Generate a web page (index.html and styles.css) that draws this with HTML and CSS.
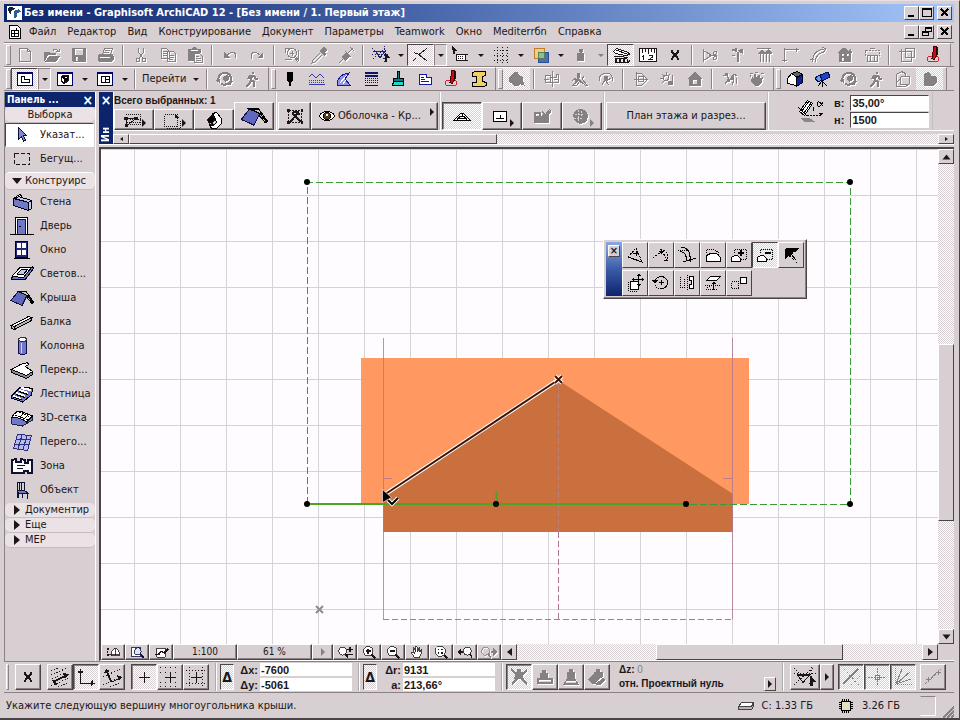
FILE: index.html
```html
<!DOCTYPE html>
<html lang="ru">
<head>
    <meta charset="UTF-8">
    <meta name="viewport" content="width=device-width, initial-scale=1.0">
    <title>Graphisoft ArchiCAD 12</title>
    <link rel="stylesheet" href="styles.css">
</head>
<body>
    <!-- Icon sprite, every icon sits on a 20x20 grid -->
    <svg class="sprite" aria-hidden="true">
        <symbol id="new" viewBox="0 0 20 20"><path d="M4.500 3.500h8l3 3v10h-11zM12.500 3.500v3h3"/></symbol>
        <symbol id="open" viewBox="0 0 20 20"><path class="f" d="M2 7h5l1 1h6v2H6l-3 6H2zM7 11h11l-4 6H3z"/><path d="M11 5.500c2-2 4-2 5 1M14 6.500h3v-3"/></symbol>
        <symbol id="save" viewBox="0 0 20 20"><path class="f" fill-rule="evenodd" d="M3 3h14v14H4l-1-1zM6 4v6h8V4zM7 12v4h2v-4z"/></symbol>
        <symbol id="print" viewBox="0 0 20 20"><path d="M6.500 9.500l2-6h8l-2 6M9 5.500h5M8 7.500h5"/><path class="f" fill-rule="evenodd" d="M3 9h14v2l1-1v4l-3 3H3l-1-2v-4zM4 12v1h10v-1z"/></symbol>
        <symbol id="cut" viewBox="0 0 20 20"><path d="M7.500 3v4l4 6M12.500 3v4l-4 6"/><circle cx="7" cy="15" r="2"/><circle cx="13" cy="15" r="2"/></symbol>
        <symbol id="copy" viewBox="0 0 20 20"><path d="M3.500 3.500h5l3 3v7h-8zM5 6.500h4M5 8.500h5M5 10.500h5M9.500 6.500h6l2 2v8h-8zM11 10.500h5M11 12.500h5M11 14.500h4"/></symbol>
        <symbol id="paste" viewBox="0 0 20 20"><path class="f" fill-rule="evenodd" d="M3 4h4l1-2h3l1 2h4v4H9v8H3zM6 5v1h7V5z"/><path d="M9.500 8.500h5l3 3v6h-8zM11 11.500h3M11 13.500h5M11 15.500h5"/></symbol>
        <symbol id="undo" viewBox="0 0 20 20"><path d="M7 10l4-2.500c4-1 6 2 4 6"/><path class="f" d="M4 7v6h6z"/></symbol>
        <symbol id="redo" viewBox="0 0 20 20"><path d="M13 10L9 7.500c-4-1-6 2-4 6"/><path class="f" d="M16 7v6h-6z"/></symbol>
        <symbol id="find" viewBox="0 0 20 20"><path d="M3 3.500h5M3.500 3v5M3 14.500h7M16.500 5v9"/><circle cx="10" cy="8" r="4.500"/><path d="M8 8.500h4M10.500 6v5M12 12l4 5M14 12l3 4"/></symbol>
        <symbol id="pipette" viewBox="0 0 20 20"><path class="f" d="M12 4l3-2 3 3-2 3 1 1-2 2-5-5 2-2z"/><path d="M11 8l-7 7-1 3 3-1 7-7"/></symbol>
        <symbol id="syringe" viewBox="0 0 20 20"><path class="f" d="M10 7l4 4-5 5-4-4z"/><path d="M3 18l4-4M12 8l5-5M14 2l4 4M9 6l6 6"/></symbol>
        <symbol id="snapguide" viewBox="0 0 20 20"><g stroke="#20206a"><path d="M2 6.500h13M5 7l4 6 6-8"/><path stroke-dasharray="1 2" d="M1 9.500h18M13.500 1v17M2 14l14-12M1 3l16 14"/></g><path class="f" d="M14 8l5 5h-3v4h-2z"/></symbol>
        <symbol id="cross" viewBox="0 0 20 20"><path d="M3 7.500l5 2 8-6M7 9l9 7M2 16l3-3"/></symbol>
        <symbol id="cursorbox" viewBox="0 0 20 20"><path class="f" d="M1 1l5 5H4v3H2z"/><path fill="#fff" d="M5.500 9.500h9v6h-9z"/><path stroke-dasharray="1 1" d="M7 11.500h6M7 13.500h6"/><path stroke-dasharray="2 2" d="M15 9.500h3M15 15.500h3"/></symbol>
        <symbol id="dotgrid" viewBox="0 0 20 20"><path stroke-dasharray="1 2" d="M3 5.500h15M3 10.500h15M3 15.500h15M6.500 2v16M11.500 2v16M16.500 2v16"/></symbol>
        <symbol id="layers" viewBox="0 0 20 20"><path fill="#4b6fb5" stroke="#274d94" d="M7.500 7.500h10v10h-10z"/><path fill="#f4cc74" fill-opacity=".8" stroke="#c27e22" d="M3.500 3.500h10v10h-10z"/><path fill="#8fc08c" stroke="#56805d" d="M7.500 7.500h6v6h-6z"/></symbol>
        <symbol id="jar" viewBox="0 0 20 20"><path class="f" d="M8 4h4v3h-1v1h2v8H6V8h3V7H8z"/></symbol>
        <symbol id="teeth" viewBox="0 0 20 20"><path fill="#fff" d="M2.500 6.500l3-3 12 4 1 2-4 1-10-2z"/><path d="M5 5l11 4M3 11.500h5l9 1M4 13.500h12M4 17.500h13l2-2"/><path stroke-dasharray="2 2" stroke-width="3" d="M4 15.500h13"/></symbol>
        <symbol id="ruler" viewBox="0 0 20 20"><path fill="#fff" d="M1.500 3.500h17v13h-17z"/><path d="M4.500 4v4M7.500 4v3M10.500 4v5M13.500 4v3M16.500 4v4M5.500 10v5M4 11.500h1M11 10.500h3v2l-3 2h4"/></symbol>
        <symbol id="xmark" viewBox="0 0 20 20"><path stroke-width="2" d="M7 7l6 6M13 7l-6 6M6 6h2M12 6h2M6 14h2M12 14h2"/></symbol>
        <symbol id="trim" viewBox="0 0 20 20"><path d="M3.500 4v13M4 6l9 5M4 15l9-5M9 10.500h8"/><circle cx="15" cy="8" r="1.500"/><circle cx="15" cy="13" r="1.500"/></symbol>
        <symbol id="axe" viewBox="0 0 20 20"><path class="f" d="M3 5l7-2v4L6 6zM10 5l6-1v5l-4-2z"/><path d="M11.500 7v10M10.500 7v10M5 10h3"/></symbol>
        <symbol id="adjust" viewBox="0 0 20 20"><path d="M3 3.500h14M6.500 8v9M9.500 7v10M12.500 7v10M15.500 8v9"/><path class="f" d="M4 8l4-4 3 4 3-4 4 4v1H4z"/></symbol>
        <symbol id="corner" viewBox="0 0 20 20"><path d="M3.500 17V4.500h14M3.500 3v3M15 2.500v4M1 15.500h5"/></symbol>
        <symbol id="fillet" viewBox="0 0 20 20"><path d="M4.500 17c0-7 4-12 12-13M7.500 17c0-6 4-9 8-10M14 2l4 2-3 4M2 14h4"/></symbol>
        <symbol id="house2" viewBox="0 0 20 20"><path class="f" fill-rule="evenodd" d="M3 8l4-5h3l3 3 3-3 1 5h-1v9H4V8zM7 9v2h2V9zM12 9v2h2V9zM7 13v3h2v-3z"/></symbol>
        <symbol id="stretch" viewBox="0 0 20 20"><path stroke-dasharray="2 1" d="M3.500 5.500h14v5h-14z"/><path d="M5.500 10.500h10v6h-10zM8.500 11v5M12.500 11v5M8 3.500h5"/></symbol>
        <symbol id="group" viewBox="0 0 20 20"><path d="M4.500 6.500h10v10h-10zM8.500 3.500h9v9h-9zM2 6.500h4M4.500 4v4M12 12.500h5M14.500 10v6"/></symbol>
        <symbol id="redpen" viewBox="0 0 20 20"><ellipse cx="9" cy="14" rx="6" ry="3" stroke="#e02030"/><path fill="#c80d1a" stroke="#500" d="M10 1.500h3l1 7-4 6-2-1 1-6z"/><path d="M12 2v8" stroke="#200"/></symbol>

        <symbol id="plan" viewBox="0 0 20 20"><path fill="#fff" stroke="#00006a" d="M2.500 3.500h15v13h-15zM2.500 4.500h15"/><path stroke="#000" d="M6.500 7.500h3v3h5v3h-8z"/></symbol>
        <symbol id="view3d" viewBox="0 0 20 20"><path fill="#fff" stroke="#00006a" d="M2.500 3.500h15v13h-15zM2.500 4.500h15"/><path fill="#000" d="M6 8l3-2 5 1-1 5-4 3-3-3z"/><path fill="#fff" stroke="none" d="M7 9l2 1v3l-2-1zM10 8l2 0-1 2z"/></symbol>
        <symbol id="layout" viewBox="0 0 20 20"><path fill="#fff" stroke="#00006a" d="M2.500 3.500h15v13h-15zM2.500 4.500h15"/><path stroke="#000" d="M6.500 7.500h8v6h-8zM10.500 8v5M11 10.500h3"/></symbol>
        <symbol id="orbit" viewBox="0 0 20 20"><path stroke-width="2" d="M4 13c-2-5 1-9 6-9 4 0 6 2 6 6M16 10c0 4-5 7-10 5"/><path class="f" d="M8 8l4-2 2 2v3l-4 2-2-2zM13 13l5-1-3 5zM3 8l-2 4 4 2z"/></symbol>
        <symbol id="walk" viewBox="0 0 20 20"><circle class="f" cx="11" cy="4" r="1.500"/><path d="M10 6l-1 5 3 2v5M9 11l-1 3-4 4M6 10l2-3 4 0 2 3h2" stroke-width="2"/></symbol>
        <symbol id="marker" viewBox="0 0 20 20"><path fill="#000" stroke="none" d="M7 3h6v9l-2 1v4H9v-4l-2-1z"/></symbol>
        <symbol id="zigzag" viewBox="0 0 20 20"><g stroke="#3438b0"><path d="M2 8l3-3 4 4 4-4 4 4M2 15.500h16"/><path stroke-dasharray="1 1" d="M2 11.500h16M2 13.500h16"/></g></symbol>
        <symbol id="arcfill" viewBox="0 0 20 20"><path fill="#8f94e8" stroke="#1a1a90" d="M3 16c0-8 5-11 12-12l-4 6 5 6z"/><path stroke="#fff" d="M6 14l7-8M9 15l3-4"/></symbol>
        <symbol id="composite" viewBox="0 0 20 20"><path stroke="#0c1464" stroke-width="2" d="M4 4h13M4 7h13"/><path stroke="#0c1464" stroke-dasharray="1 1" d="M4 9.500h13M4 11.500h13M4 13.500h13"/><path d="M4 16.500h13"/></symbol>
        <symbol id="brush" viewBox="0 0 20 20"><path fill="#167a7a" stroke="#000" d="M9.500 2.500h2v7h4v3h-10v-3h4z"/><path fill="#1fd6d0" stroke="#000" d="M5.500 12.500h10v4h-11z"/></symbol>
        <symbol id="zoneblue" viewBox="0 0 20 20"><path fill="#fff" stroke="#1616a8" d="M4.500 5.500h7v3h5v7h-12zM6 8.500h3M6 10.500h4M6 12.500h8"/></symbol>
        <symbol id="beamy" viewBox="0 0 20 20"><path fill="#f0d060" stroke="#000" d="M3.500 3.500l3-1h10v4l-3 1v5l4 1v3l-3 1h-11v-4h4V7.500h-4z"/></symbol>
        <symbol id="blob" viewBox="0 0 20 20"><path class="f" d="M2 8l3-2 2-3h4l1 3 4 2v3l2 6-5-2-2 2H7l-3-3-2-1z"/></symbol>
        <symbol id="align" viewBox="0 0 20 20"><path d="M10.500 2v16M3.500 6.500h5v7h-5zM8.500 8.500h6v-3h2v8h-8M2 10.500h5M12 10.500h5"/></symbol>
        <symbol id="person" viewBox="0 0 20 20"><path d="M9 5v6l-5 5h4l3-4 5 4h2l-5-6 2-3M3 12l4-3"/><path class="f" d="M8 4h3v5H8zM6 10l4-1 3 4-2 1-2-2-3 3z"/></symbol>
        <symbol id="persono" viewBox="0 0 20 20"><path d="M3 12c0-6 4-8 8-8s6 4 6 8M6 16l3-5 4 5M9 7l2 5 4-3"/><path class="f" d="M8 7h4v4H8z"/></symbol>
        <symbol id="mirror" viewBox="0 0 20 20"><path d="M5.500 3v14M5.500 4.500h5l5 5v2l-5 5h-5M3 10.500h14"/><circle cx="10" cy="10" r="3"/></symbol>
        <symbol id="suncam" viewBox="0 0 20 20"><circle cx="8" cy="9" r="2.500"/><path d="M8.500 3v3M2 9.500h3M4 5l2 2M12 5l-2 2M4 14l2-2M14.500 6v9"/><path class="f" d="M10 12h5v4h-5z"/></symbol>
        <symbol id="home" viewBox="0 0 20 20"><path class="f" fill-rule="evenodd" d="M2 10l8-7 8 7h-2v7H4v-7zM8 11v4h4v-4z"/></symbol>
        <symbol id="figures" viewBox="0 0 20 20"><path d="M3 6l4 1 3 4 4-6 3 2M5 15l3-4M12 16l2-5M16 9v6"/><path class="f" d="M5 4h3v3H5zM11 7h3v4h-3zM7 10h3v3H7z"/></symbol>
        <symbol id="handful" viewBox="0 0 20 20"><path class="f" d="M5 8l2 1V5h2v3l2-2h2v3l3-1-1 5-3 4H8l-4-5z"/><path d="M3 4h3M8 3h3M14 4h3M3.500 6v2"/></symbol>
        <symbol id="box3d" viewBox="0 0 20 20"><path fill="#fff" stroke="#000" d="M2.500 9.500l4-5 5 3v9l-9-2z"/><path fill="#666" stroke="#000" d="M6.500 4.500l6-2 5 3-5 3z"/><path fill="#0c20a0" stroke="#000" d="M11.500 8.500l6-3v8l-6 4z"/></symbol>
        <symbol id="camera" viewBox="0 0 20 20"><path fill="#2340d0" stroke="#00104a" d="M8 6l8-3 2 5-8 4z"/><path fill="#6b9ae8" stroke="#00104a" d="M3 9l5-3 2 5-4 2z"/><path stroke="#000" d="M10 12v6M10 12l-4 5M10 12l5 5"/></symbol>
        <symbol id="wirebox" viewBox="0 0 20 20"><path d="M3.500 5.500l5-3 4 2v3h4v7l-4 3h-9zM7.500 7.500v8h7M7.500 7.500h5M3.500 13l4-3"/></symbol>
        <symbol id="solidbox" viewBox="0 0 20 20"><path class="f" d="M4 5l4-2 3 2v2l4 0 2 2v5l-4 3H4z"/></symbol>

        <symbol id="arrow" viewBox="0 0 20 20"><path fill="#8088d0" stroke="#101040" d="M6.500 2.500l8 8-3 .5 2 4-2 1-2-4-3 2z"/></symbol>
        <symbol id="marquee" viewBox="0 0 20 20"><path stroke-dasharray="4 2" d="M2.500 4.500h15v11h-15z"/></symbol>
        <symbol id="wall" viewBox="0 0 24 20"><path fill="#fff" stroke="#000" d="M3.500 6.500l6-4 2 1v2l-6 3z"/><path fill="#7078c8" stroke="#000" d="M3.500 6.500l15 4v8l-15-5z"/><path fill="#c4c8ee" stroke="#000" d="M18.500 10.500l3-2v8l-3 2zM5.500 6.500l3-2 13 4-3 2z"/></symbol>
        <symbol id="door" viewBox="0 0 24 20"><path fill="#fff" stroke="#000" d="M5.500 1.500h12v17h-12z"/><path fill="#7078c8" stroke="#10104a" d="M7.500 3.500h8v15h-8z"/><path stroke="#000" d="M0 18.500h24M9 10.500h2"/></symbol>
        <symbol id="window" viewBox="0 0 24 20"><path fill="#242478" stroke="#000" d="M5.500 1.500h12v16h-12z"/><path fill="#fff" stroke="none" d="M7 3h4v5H7zM12 3h4v5h-4zM7 10h4v5H7zM12 10h4v5h-4z"/><path stroke="#000" d="M4 18.500h16"/></symbol>
        <symbol id="skylight" viewBox="0 0 24 20"><path fill="#7078c8" stroke="#000" d="M1 15l9-12 14 1-9 12z"/><path fill="#fff" stroke="#000" d="M2 12l8-8 12-1-9 11z"/><path fill="#c4c8ee" stroke="#000" d="M7 10l5-5h6l-5 6z"/></symbol>
        <symbol id="roof" viewBox="0 0 24 20"><path fill="#c8c8b8" stroke="#000" d="M8 3.500h8l8 11-2 1-6-7z"/><path fill="#6068bc" stroke="#10104a" d="M1 12.500l7-9 9 4-5 10z"/><path stroke="#000" d="M8 3l9 4.500M17 7l6 8"/></symbol>
        <symbol id="beam" viewBox="0 0 24 20"><path fill="#fff" stroke="#000" d="M1.500 13.500l17-9 3 1-17 9z"/><path fill="#b8b8b8" stroke="#000" d="M4.500 14.500l17-9v3l-17 9zM1.500 13.500l3 1v3l-3-1z"/></symbol>
        <symbol id="column" viewBox="0 0 24 20"><path fill="#7078c8" stroke="#10104a" d="M8.500 3v14c2 2 6 2 8 0V3z"/><ellipse cx="12.500" cy="3.500" rx="4" ry="2" fill="#fff" stroke="#333"/><path stroke="#d0d0ff" d="M11.500 7v10"/></symbol>
        <symbol id="slab" viewBox="0 0 24 20"><path fill="#fff" stroke="#000" d="M1.500 9.500l9-5 7-2 1 2-3 2 7 5-6 4z"/><path fill="#8a8a9a" stroke="#000" d="M1.500 9.500l15 6 6-4v3l-6 4-15-6z"/></symbol>
        <symbol id="stair" viewBox="0 0 24 20"><path fill="#7078c8" stroke="#000" d="M1.500 12l9-9h6l6 2-1 6-9 7-11-4z"/><path stroke="#fff" stroke-width="2" d="M3 12l8 3M6 9l9 3M9 6l9 3M11 4l10 2"/><path stroke="#000" d="M3 13l9 3M6 10.500l9 3M9 7.500l9 3"/></symbol>
        <symbol id="mesh" viewBox="0 0 24 20"><path fill="#7078c8" stroke="#20204a" d="M1.500 10v6l11 2 10-6V8z"/><path fill="#fff" stroke="#000" d="M1.500 10c3-6 7-8 11-6l10 4-6 6c-5-4-9-5-15-4z"/><path stroke="#000" stroke-dasharray="2 1" d="M5 7l13 5M9 4l11 5M8 11l7-7M13 12l6-6"/></symbol>
        <symbol id="curtain" viewBox="0 0 24 20"><path fill="#b8bcec" stroke="#2c2c80" d="M3.500 16.500l4-14 14 1-4 15z"/><path stroke="#2c2c80" d="M12 3l-4 14M17 3.500l-4 14M6.500 7l14 1M5 12l14 1"/></symbol>
        <symbol id="zone" viewBox="0 0 24 20"><path fill="#fff" stroke="#101030" stroke-width="2" d="M2 4l4-1v3h5V3l4 1v3h3V4h4v13h-4v-2h-4v2H2z"/><path stroke="#101030" d="M7 9.500h8M7 12.500h6"/></symbol>
        <symbol id="chair" viewBox="0 0 24 20"><path stroke="#101030" d="M7.500 2v16M14.500 2v9M11.500 3v7M9.500 3v7M7 2.500h8M17.500 13v6M12.500 13v5M8.500 13v5"/><path fill="#7078c8" stroke="#101030" d="M7.500 10.500h7l4 3h-10z"/></symbol>

        <symbol id="nodes" viewBox="0 0 20 20"><path stroke-dasharray="1 1" d="M4 4.500h14M8 9.500h11M18.500 4v12M8 14.500h10M5 12.500h13"/><path d="M3 8.500h11L4.500 16M4.500 8v8"/><path class="f" d="M2 7h4v3H2zM12 7h4v3h-4zM3 14h3v3H3z"/></symbol>
        <symbol id="selbox" viewBox="0 0 20 20"><path stroke-dasharray="1 1" d="M2.500 4.500h13v12h-13zM5 18.500h13v-9"/><path class="f" d="M13 3l4 5h-4z"/></symbol>
        <symbol id="magnet" viewBox="0 0 20 20"><path fill="#fff" stroke="#000" d="M8.500 3.500l4-1 5 6v5l-5 5h-5l-2-4h5l2-2-1-3z"/><path fill="#000" d="M3 10l5-5 3 4-4 6zM5 13l3 3 3-2"/></symbol>
        <symbol id="roofset" viewBox="0 0 20 20"><path stroke-dasharray="2 1" d="M3.500 4.500h13v12h-13z"/><path stroke-width="2" d="M5 16l8-9M8 8l8 8M7 8l2-2h4l1 3"/><path class="f" d="M2 3h3v3H2zM16 3h2v3h-2zM2 15h3v3H2zM16 15h2v3h-2z"/></symbol>
        <symbol id="eye" viewBox="0 0 20 20"><path fill="#fff" stroke="#000" d="M2 10c4-6 12-6 16 0-4 6-12 6-16 0zM3 9c4-5 10-5 14 0"/><circle cx="10" cy="10" r="3.500" fill="#5a3c1c" stroke="#000"/><path fill="#fff" stroke="none" d="M9 8h2v2H9z"/></symbol>
        <symbol id="gable" viewBox="0 0 20 20"><path fill="#fff" stroke="#000" d="M1.500 14.500l7-7h3l7 7z"/><path stroke="#000" d="M5.500 14v-1l3-3h3l3 3v1M10 8v3M7 12l6 0"/></symbol>
        <symbol id="boxline" viewBox="0 0 20 20"><path fill="#fff" stroke="#000" d="M3.500 5.500h13v10h-13z"/><path stroke="#000" d="M6 12.500h8M10.500 9v3"/></symbol>
        <symbol id="polycheck" viewBox="0 0 20 20"><path class="f" fill-rule="evenodd" d="M2 6h7v4l3-2 3-1 4-4v3l-2 3v8H2zM4 8v2h3V8z"/><path d="M10 5l3 4 5-6"/></symbol>
        <symbol id="dome" viewBox="0 0 20 20"><path class="f" d="M3 10c0-5 4-7 8-7s7 4 7 8l-2 5-6 2-5-3z"/><path stroke="#d7cfd1" stroke-dasharray="2 1" d="M5 8h9M4 12h8M8 4v11M12 5l-1 6"/></symbol>
        <symbol id="slope" viewBox="0 0 28 26"><path fill="#8d8789" stroke="none" d="M3 20h9l7 4H8z"/><path fill="#fff" stroke="#000" d="M2.500 13.500l8-11 5 3-8 12z"/><path stroke="#000" d="M5 13l7-10M7 15l7-10M1 9l9 9M16 9v4"/><path stroke="#000" stroke-dasharray="2 1" d="M10 17.500h14"/><path stroke="#000" d="M26 4c-3 6-6 5-6 2s3-3 6 2"/><path fill="#000" stroke="none" d="M21 15h5l-2 3z"/></symbol>

        <symbol id="p1" viewBox="0 0 20 20"><path stroke-dasharray="2 1" d="M3 12l8-9 6 14zM3 12l13 5"/><path d="M8 8.500h6M11.500 6v5"/></symbol>
        <symbol id="p2" viewBox="0 0 20 20"><path stroke-dasharray="2 1" d="M2 13l9-7 5 9M9 5c5-1 8 3 8 9"/><path d="M8 6.500h5M10.500 4v5M13 15.500h4"/></symbol>
        <symbol id="p3" viewBox="0 0 20 20"><path d="M4 2c6 0 9 5 9 10M3 7c4-1 6 3 7 8M6 17l13-4M13 11v6"/><path stroke-dasharray="1 1" d="M1 5h9"/></symbol>
        <symbol id="p4" viewBox="0 0 20 20"><path fill="#fff" d="M3.500 16.500v-6l4-2h6l4 4v4z"/><path stroke-dasharray="1 1" d="M3.500 8V4.500h7l5 3v3"/></symbol>
        <symbol id="p5" viewBox="0 0 20 20"><path stroke-dasharray="1 1" d="M5.500 8V4.500h12v10H12"/><path fill="#fff" d="M2.500 16.500v-4l3-2h3l3 3v3z"/><path stroke-width="2" d="M9 8h6M12 5v6"/></symbol>
        <symbol id="p6" viewBox="0 0 20 20"><path stroke-dasharray="1 1" d="M5.500 8V4.500h12v10H12"/><path fill="#fff" d="M2.500 16.500v-4l3-2h3l3 3v3z"/><path stroke-width="2" d="M10 8h6"/></symbol>
        <symbol id="p7" viewBox="0 0 20 20"><path class="f" d="M5 3h13l-4 4-4 1-4 4-2 3V6z"/><path d="M10 9l5 6M13 6l-5 6"/><path stroke-dasharray="1 1" d="M8 10l8 8"/></symbol>
        <symbol id="p8" viewBox="0 0 20 20"><path fill="#fff" d="M5.500 8.500h8v8h-8z"/><path stroke-dasharray="1 1" d="M3.500 9v9h8"/><path d="M13.500 1v11M8 6.500h11"/><path class="f" d="M11 3h5l-2-2zM11 11h5l-2 2zM9 4v5L7 6.500zM17 4v5l2-2.500z"/></symbol>
        <symbol id="p9" viewBox="0 0 20 20"><path d="M4 8c2-5 9-6 12-1 2 5-2 9-6 9M8 9.500h5M10.500 7v5"/><path stroke-dasharray="1 1" d="M10 16c-3 0-5-2-6-5"/><path class="f" d="M1 7h6l-3 4z"/></symbol>
        <symbol id="p10" viewBox="0 0 20 20"><path stroke-dasharray="1 1" d="M3.500 4v10.500h4V5M10.500 2v16"/><path fill="#fff" d="M12.500 3.500h4v12h-4v-4h2v-4h-2z"/></symbol>
        <symbol id="p11" viewBox="0 0 20 20"><path fill="#fff" d="M3.500 7.500l4-4h10l-4 4z"/><path stroke-dasharray="1 1" d="M2 12.500h16M3 16.500l4-4M14 16.500H3"/><path d="M10.500 9v8"/><path class="f" d="M8 11h5l-2-3z"/></symbol>
        <symbol id="p12" viewBox="0 0 20 20"><path stroke-dasharray="1 1" d="M2.500 8.500h7v7h-7z"/><path fill="#fff" d="M11.500 4.500h6v6h-6z"/></symbol>

        <symbol id="n1" viewBox="0 0 20 20"><path class="f" d="M2 5h3v2H2zM2 9h2v2H2zM2 13h3v2H2z"/><path fill="#fff" d="M7.500 14.500v-5l4-4 4 1 2 3v5z"/><path d="M5 12.500h13M12.500 6v8"/></symbol>
        <symbol id="n2" viewBox="0 0 20 20"><path fill="#fff" stroke="#10104a" d="M2.500 4.500h12v11h-12z"/><circle cx="11" cy="9" r="4.500" fill="#dfe6f8" stroke="#10104a"/><path stroke="#10104a" stroke-width="2" d="M14 12l4 5"/></symbol>
        <symbol id="n3" viewBox="0 0 20 20"><path fill="#fff" d="M4.500 5.500h11v11h-11z"/><path stroke-width="2" d="M2 13h5l3-4 4 2 5-5"/></symbol>
        <symbol id="zoompm" viewBox="0 0 20 20"><circle cx="7" cy="9" r="5" fill="#fff"/><path stroke-width="2" d="M10 12l4 5M13 7h7M16.500 4v6M13 13h7"/></symbol>
        <symbol id="zoomin" viewBox="0 0 20 20"><circle cx="9" cy="9" r="6" fill="#fff"/><path stroke-width="2" d="M13 13l5 5M6 9h6M9 6v6"/></symbol>
        <symbol id="zoomout" viewBox="0 0 20 20"><circle cx="9" cy="9" r="6" fill="#fff"/><path stroke-width="2" d="M13 13l5 5M6 9h6"/></symbol>
        <symbol id="hand" viewBox="0 0 20 20"><path fill="#fff" d="M7 17l-4-6 1-1 3 2-2-7 1.500-.5 2 5-.5-6h2l1 6 1-5h1.500v6l2-4 1 .5-1.500 6-2 4z"/></symbol>
        <symbol id="fit" viewBox="0 0 20 20"><circle cx="9" cy="9" r="6.500" fill="#fff"/><path stroke-width="2" d="M14 14l4 4M6 7h2M10 7h2M6 11h2M10 11h2"/></symbol>
        <symbol id="zprev" viewBox="0 0 20 20"><circle cx="13" cy="9" r="5" fill="#fff"/><path stroke-width="2" d="M16 12l3 5M2 10h6"/><path class="f" d="M5 5v10l-5-5z"/></symbol>
        <symbol id="znext" viewBox="0 0 20 20"><circle cx="6" cy="9" r="5"/><path stroke-width="2" d="M9 12l3 5M12 10h5"/><path class="f" d="M15 5v10l5-5z"/></symbol>

        <symbol id="b1" viewBox="0 0 20 20"><path stroke-dasharray="1 2" d="M1 8l16-7M1 4l8-3M1 19l18-8M8 20l11-5M2 12l16-8"/><path stroke-width="2" d="M3 15l14-7M3 13l3 5"/><path class="f" d="M13 6l6 1-4 5z"/></symbol>
        <symbol id="b2" viewBox="0 0 20 20"><path d="M4.500 4v12h12M7 4.500H2M16.500 13v5"/><path class="f" d="M2 6l2.500-4L7 6zM15 14l4 2.500-4 2.500z"/></symbol>
        <symbol id="b3" viewBox="0 0 20 20"><path stroke-dasharray="1 2" d="M1 10l17-8M1 18l18-9M8 20l11-5"/><path d="M5 4l5 11 8-4M4 4l5 11"/><path class="f" d="M2 6l2-4 4 2zM15 8l5 2-3 4z"/></symbol>
        <symbol id="b4" viewBox="0 0 20 20"><path d="M5 10.500h11M10.500 5v11"/></symbol>
        <symbol id="b5" viewBox="0 0 20 20"><path stroke-dasharray="1 4" d="M0 .500h20M0 5.500h20M0 15.500h20M0 19.500h20"/><path d="M5 10.500h11M10.500 5v11"/></symbol>
        <symbol id="b6" viewBox="0 0 20 20"><path stroke-dasharray="1 2" d="M0 3.500h20M0 16.500h20M3.500 0v20M16.500 0v20"/><path d="M5 10.500h11M10.500 5v11"/></symbol>
        <symbol id="g1" viewBox="0 0 20 20"><path class="f" d="M8 2h4v3h2v4l1 3H5l1-3V5h2z"/><path stroke-width="2" d="M2 2l16 15M18 3L3 17"/></symbol>
        <symbol id="g2" viewBox="0 0 20 20"><path class="f" fill-rule="evenodd" d="M7 3h4v3h2v5h5v6H2v-6h3V6h2zM4 13v2h12v-2z"/></symbol>
        <symbol id="g3" viewBox="0 0 20 20"><path class="f" fill-rule="evenodd" d="M8 2h4v3h2v6l4 7H2l4-7V5h2zM5 14v2h10v-2z"/></symbol>
        <symbol id="g4" viewBox="0 0 20 20"><path class="f" d="M9 2h4v3h3v5l2 3-5 5-8-1-4-5 4-4 2-2V5h2z"/><path stroke="#fff" d="M9 16l7-6"/></symbol>
        <symbol id="sg" viewBox="0 0 24 20"><path stroke-dasharray="1 2" d="M1 1l18 18M1 18L20 1M18.500 0v20M1 6.500h22"/><path d="M4 7.500h13l-7 8-6-8M4 8.500h13"/><path class="f" d="M17 8l6 7h-3v4h-3z"/></symbol>
        <symbol id="s1" viewBox="0 0 20 20"><path stroke-width="2" d="M2 17L17 2"/><path stroke-dasharray="2 2" d="M3 2l15 16M10 18l9-9"/></symbol>
        <symbol id="s2" viewBox="0 0 20 20"><path stroke-dasharray="2 1" d="M1 10.500h18M10.500 1v18"/><path d="M8.500 8.500h4v4h-4z"/></symbol>
        <symbol id="s3" viewBox="0 0 20 20"><path stroke-dasharray="1 1" d="M2.500 1v16.500H19"/><path d="M3 17L9 2M3 17L17 5M3 17l15-5"/></symbol>
        <symbol id="s4" viewBox="0 0 20 20"><path stroke-dasharray="3 1" d="M2 17L18 2"/><path d="M3 12.500h5M5.500 10v5M13 5.500h5M15.500 3v5"/></symbol>
    </svg>

    <header class="titlebar">
        <svg class="app-logo" viewBox="0 0 16 16"><path fill="#fff" d="M0 1h16v14H0z"/><path fill="#123" d="M1 3c3-3 7-1 8 1l-4 1-1 4-2-1z"/><path fill="#2f5d8c" d="M7 6l6-2 2 3-4 1-1 5H7z"/></svg>
        <h1>Без имени - Graphisoft ArchiCAD 12 - [Без имени / 1. Первый этаж]</h1>
        <div class="win-controls">
            <button aria-label="Свернуть"><svg viewBox="0 0 14 12"><path stroke-width="2" d="M3 9h6"/></svg></button>
            <button aria-label="Развернуть"><svg viewBox="0 0 14 12"><path d="M2.500 1.500h9v8h-9zM2.500 2.500h9"/></svg></button>
            <button class="close" aria-label="Закрыть"><svg viewBox="0 0 14 12"><path stroke-width="2" d="M3 2l7 7M10 2L3 9"/></svg></button>
        </div>
    </header>

    <nav class="menubar">
        <svg class="doc-icon" viewBox="0 0 14 16"><path fill="#fff" stroke="#000" d="M1.500 1.500h8l3 3v10h-11z"/><path stroke="#000" d="M3.500 6.500h7v6h-7zM6.500 7v5M4 9.500h6M8.500 4v3"/></svg>
        <a href="#">Файл</a>
        <a href="#">Редактор</a>
        <a href="#">Вид</a>
        <a href="#">Конструирование</a>
        <a href="#">Документ</a>
        <a href="#">Параметры</a>
        <a href="#">Teamwork</a>
        <a href="#">Окно</a>
        <a href="#">Mediterrбn</a>
        <a href="#">Справка</a>
        <div class="win-controls">
            <button aria-label="Свернуть окно"><svg viewBox="0 0 14 12"><path stroke-width="2" d="M3 9h6"/></svg></button>
            <button aria-label="Восстановить окно"><svg viewBox="0 0 14 12"><path d="M5.500 1.500h6v4h-6zM5 2.500h6M2.500 5.500h6v4h-6zM2 6.500h6"/></svg></button>
            <button class="close" aria-label="Закрыть окно"><svg viewBox="0 0 14 12"><path stroke-width="2" d="M3 2l7 7M10 2L3 9"/></svg></button>
        </div>
    </nav>

    <!-- Standard toolbar -->
    <div class="toolbar-row">
        <div class="toolbar">
            <button class="tool" disabled aria-label="Новый"><svg><use href="#new"/></svg></button>
            <button class="tool" disabled aria-label="Открыть"><svg><use href="#open"/></svg></button>
            <button class="tool" disabled aria-label="Сохранить"><svg><use href="#save"/></svg></button>
            <button class="tool" disabled aria-label="Печать"><svg><use href="#print"/></svg></button>
            <span class="sep"></span>
            <button class="tool" disabled aria-label="Вырезать"><svg><use href="#cut"/></svg></button>
            <button class="tool" disabled aria-label="Копировать"><svg><use href="#copy"/></svg></button>
            <button class="tool" disabled aria-label="Вставить"><svg><use href="#paste"/></svg></button>
            <span class="sep"></span>
            <button class="tool" disabled aria-label="Отменить"><svg><use href="#undo"/></svg></button>
            <button class="tool" disabled aria-label="Повторить"><svg><use href="#redo"/></svg></button>
            <span class="sep"></span>
            <button class="tool" disabled aria-label="Найти"><svg><use href="#find"/></svg></button>
            <button class="tool" disabled aria-label="Пипетка"><svg><use href="#pipette"/></svg></button>
            <button class="tool" disabled aria-label="Шприц"><svg><use href="#syringe"/></svg></button>
            <span class="sep"></span>
            <button class="tool" aria-label="Привязка"><svg><use href="#snapguide"/></svg></button>
            <button class="drop" aria-label="Варианты привязки"></button>
            <button class="tool pressed" aria-label="Линии"><svg><use href="#cross"/></svg></button>
            <button class="drop framed" aria-label="Варианты линий"></button>
            <button class="tool" aria-label="Координаты"><svg><use href="#cursorbox"/></svg></button>
            <button class="drop" aria-label="Варианты координат"></button>
            <button class="tool" aria-label="Сетка"><svg><use href="#dotgrid"/></svg></button>
            <button class="drop" aria-label="Варианты сетки"></button>
            <button class="tool" aria-label="Слои"><svg><use href="#layers"/></svg></button>
            <button class="drop" aria-label="Варианты слоев"></button>
            <button class="tool" disabled aria-label="Гравитация"><svg><use href="#jar"/></svg></button>
            <button class="drop" disabled aria-label="Варианты гравитации"></button>
            <button class="tool pressed" aria-label="Группы"><svg><use href="#teeth"/></svg></button>
            <button class="tool" aria-label="Размер"><svg><use href="#ruler"/></svg></button>
            <button class="tool" aria-label="Узел"><svg><use href="#xmark"/></svg></button>
            <span class="sep"></span>
            <button class="tool" disabled aria-label="Обрезать"><svg><use href="#trim"/></svg></button>
            <button class="tool" disabled aria-label="Разделить"><svg><use href="#axe"/></svg></button>
            <button class="tool" disabled aria-label="Подогнать"><svg><use href="#adjust"/></svg></button>
            <button class="tool" disabled aria-label="Угол"><svg><use href="#corner"/></svg></button>
            <button class="tool" disabled aria-label="Скругление"><svg><use href="#fillet"/></svg></button>
            <button class="tool" disabled aria-label="Здание"><svg><use href="#house2"/></svg></button>
            <button class="tool" disabled aria-label="Растянуть"><svg><use href="#stretch"/></svg></button>
            <span class="sep"></span>
            <button class="tool" disabled aria-label="Группировать"><svg><use href="#group"/></svg></button>
            <button class="tool" aria-label="Пометка"><svg><use href="#redpen"/></svg></button>
        </div>
    </div>

    <!-- View toolbars -->
    <div class="toolbar-row">
        <div class="toolbar">
            <button class="tool pressed" aria-label="План"><svg><use href="#plan"/></svg></button>
            <button class="drop framed" aria-label="Варианты плана"></button>
            <button class="tool" aria-label="3D"><svg><use href="#view3d"/></svg></button>
            <button class="drop" aria-label="Варианты 3D"></button>
            <button class="tool" aria-label="Макет"><svg><use href="#layout"/></svg></button>
            <button class="drop" aria-label="Варианты макета"></button>
            <span class="sep"></span>
            <button class="goto">Перейти<span class="caret"></span></button>
            <span class="sep"></span>
            <button class="tool" disabled aria-label="Орбита"><svg><use href="#orbit"/></svg></button>
            <button class="tool" disabled aria-label="Прогулка"><svg><use href="#walk"/></svg></button>
        </div>
        <div class="toolbar">
            <button class="tool" aria-label="Перо"><svg><use href="#marker"/></svg></button>
            <button class="tool" aria-label="Линии"><svg><use href="#zigzag"/></svg></button>
            <button class="tool" aria-label="Штриховки"><svg><use href="#arcfill"/></svg></button>
            <button class="tool" aria-label="Конструкции"><svg><use href="#composite"/></svg></button>
            <button class="tool" aria-label="Покрытия"><svg><use href="#brush"/></svg></button>
            <button class="tool" aria-label="Зоны"><svg><use href="#zoneblue"/></svg></button>
            <button class="tool" aria-label="Пометки"><svg><use href="#redpen"/></svg></button>
            <button class="tool" aria-label="Профили"><svg><use href="#beamy"/></svg></button>
        </div>
        <div class="toolbar">
            <button class="tool dither" disabled aria-label="Проекция"><svg><use href="#blob"/></svg></button>
            <span class="sep"></span>
            <button class="tool" disabled aria-label="Выровнять"><svg><use href="#align"/></svg></button>
            <button class="tool" disabled aria-label="Камера"><svg><use href="#person"/></svg></button>
            <button class="tool" disabled aria-label="Обход"><svg><use href="#persono"/></svg></button>
            <span class="sep"></span>
            <button class="tool" disabled aria-label="Отражение"><svg><use href="#mirror"/></svg></button>
            <button class="tool" disabled aria-label="Солнце"><svg><use href="#suncam"/></svg></button>
            <button class="tool" disabled aria-label="Домой"><svg><use href="#home"/></svg></button>
            <span class="sep"></span>
            <button class="tool" disabled aria-label="Фигуры"><svg><use href="#figures"/></svg></button>
            <button class="tool" disabled aria-label="Захват"><svg><use href="#handful"/></svg></button>
        </div>
        <div class="toolbar">
            <button class="tool" aria-label="Объем"><svg><use href="#box3d"/></svg></button>
            <button class="tool" aria-label="Съемка"><svg><use href="#camera"/></svg></button>
            <button class="tool" disabled aria-label="Вращение"><svg><use href="#orbit"/></svg></button>
            <button class="tool" disabled aria-label="Ходьба"><svg><use href="#walk"/></svg></button>
            <button class="tool" disabled aria-label="Каркас"><svg><use href="#wirebox"/></svg></button>
            <button class="tool dither" disabled aria-label="Тела"><svg><use href="#solidbox"/></svg></button>
        </div>
    </div>

    <div class="workspace">
        <aside class="toolbox">
            <div class="toolbox-title">Панель ...<button aria-label="Закрыть панель">×</button></div>
            <h2 class="toolbox-head center">Выборка</h2>
            <button class="item active"><svg><use href="#arrow"/></svg>Указат...</button>
            <button class="item"><svg><use href="#marquee"/></svg>Бегущ...</button>
            <h2 class="toolbox-head spaced"><span class="tri down"></span>Конструирс</h2>
            <button class="item"><svg><use href="#wall"/></svg>Стена</button>
            <button class="item"><svg><use href="#door"/></svg>Дверь</button>
            <button class="item"><svg><use href="#window"/></svg>Окно</button>
            <button class="item"><svg><use href="#skylight"/></svg>Светов...</button>
            <button class="item"><svg><use href="#roof"/></svg>Крыша</button>
            <button class="item"><svg><use href="#beam"/></svg>Балка</button>
            <button class="item"><svg><use href="#column"/></svg>Колонна</button>
            <button class="item"><svg><use href="#slab"/></svg>Перекр...</button>
            <button class="item"><svg><use href="#stair"/></svg>Лестница</button>
            <button class="item"><svg><use href="#mesh"/></svg>3D-сетка</button>
            <button class="item"><svg><use href="#curtain"/></svg>Перего...</button>
            <button class="item"><svg><use href="#zone"/></svg>Зона</button>
            <button class="item"><svg><use href="#chair"/></svg>Объект</button>
            <h2 class="toolbox-head"><span class="tri"></span>Документир</h2>
            <h2 class="toolbox-head"><span class="tri"></span>Еще</h2>
            <h2 class="toolbox-head"><span class="tri"></span>МЕР</h2>
        </aside>

        <main class="content">
            <!-- Info box -->
            <section class="infobox">
                <div class="info-strip"><button aria-label="Закрыть">×</button><span>Ин</span></div>
                <div class="info-body">
                    <div class="info-tools">
                        <div class="info-group selection">
                            <div>
                                <p>Всего выбранных: 1</p>
                                <div class="row">
                                    <button class="raised flat" aria-label="Настройка"><svg><use href="#nodes"/></svg><span class="tri small"></span></button>
                                    <button class="raised flat" aria-label="Выделение"><svg><use href="#selbox"/></svg><span class="tri small"></span></button>
                                    <button class="raised flat" aria-label="Магнит"><svg><use href="#magnet"/></svg></button>
                                </div>
                            </div>
                            <button class="raised big" aria-label="Крыша"><svg class="wide"><use href="#roof"/></svg></button>
                        </div>
                        <div class="info-group">
                            <button class="raised narrow" aria-label="Параметры крыши"><svg><use href="#roofset"/></svg></button>
                            <button class="raised layer"><svg><use href="#eye"/></svg>Оболочка - Кр...<span class="tri small"></span></button>
                        </div>
                        <div class="info-group">
                            <button class="raised pressed" aria-label="Скат"><svg><use href="#gable"/></svg></button>
                            <button class="raised" aria-label="Прямоугольник"><svg><use href="#boxline"/></svg><span class="tri small"></span></button>
                            <button class="raised" disabled aria-label="Многоугольник"><svg><use href="#polycheck"/></svg></button>
                            <button class="raised" disabled aria-label="Купол"><svg><use href="#dome"/></svg><span class="tri small"></span></button>
                        </div>
                        <div class="info-group">
                            <button class="raised plan">План этажа и разрез...</button>
                        </div>
                        <div class="info-group angles">
                            <svg class="slope"><use href="#slope"/></svg>
                            <div class="fields">
                                <label for="angle">в:</label><input id="angle" type="text" value="35,00°">
                                <label for="height">н:</label><input id="height" type="text" value="1500">
                            </div>
                        </div>
                    </div>
                    <div class="scroll-h mini">
                        <button aria-label="Влево"><span class="tri left small"></span></button>
                        <div class="thumb"></div>
                        <span class="track"></span>
                        <button aria-label="Вправо"><span class="tri small"></span></button>
                    </div>
                </div>
            </section>

            <!-- Floor plan -->
            <section class="plan-view">
                <div class="drawing">
                    <svg class="plan-svg">
                        <defs>
                            <pattern id="grid" width="46" height="46" patternUnits="userSpaceOnUse" x="134" y="195"><path d="M0 .500h46M.500 0v46" stroke="#d3d3d9"/></pattern>
                        </defs>
                        <g transform="translate(-101 -149)">
                            <rect x="100" y="148" width="3000" height="3000" fill="url(#grid)"/>
                            <rect x="361" y="358" width="388" height="146" fill="#ff9861"/>
                            <path d="M383 495L558 380L733 494V532H383z" fill="#c9703e"/>
                            <g fill="none" stroke="#b0788c">
                                <path d="M383.500 338V619.500M732.500 338V619.500M384 478.500h8M723 478.500h9" stroke-opacity=".8"/>
                                <path d="M383 619.500H733" stroke-dasharray="6 3"/>
                                <path d="M558.500 384V532" stroke="#b8827a" stroke-dasharray="6 3"/>
                                <path d="M558.500 532V619" stroke-dasharray="6 3"/>
                            </g>
                            <path d="M307.500 504V182.500H850.500V504.500H686" fill="none" stroke="#3b9a38" stroke-dasharray="7 3"/>
                            <path d="M307 504H686M496.500 492v12" fill="none" stroke="#4ca41f" stroke-width="2"/>
                            <path d="M384 495L558 380" stroke="#fff" stroke-width="4"/>
                            <path d="M384 495L558 380" stroke="#3c1505" stroke-width="2"/>
                            <g fill="#000">
                                <circle cx="307" cy="182" r="3"/><circle cx="850" cy="182" r="3"/><circle cx="307" cy="504" r="3"/>
                                <circle cx="496" cy="504" r="3"/><circle cx="686" cy="504" r="3"/><circle cx="850" cy="504" r="3"/>
                            </g>
                            <path d="M555 376l7 7M562 376l-7 7" stroke="#fff" stroke-width="4"/>
                            <path d="M555 376l7 7M562 376l-7 7" stroke="#3c1505" stroke-width="2"/>
                            <path d="M316 606l7 7M323 606l-7 7" stroke="#8c8c8c" stroke-width="2"/>
                            <path d="M388 500l4 4 6-6" fill="none" stroke="#fff" stroke-width="4"/>
                            <path d="M388 500l4 4 6-6" fill="none" stroke="#000" stroke-width="2"/>
                            <path d="M382.500 489.500v13l9-5z" fill="#000" stroke="#fff" stroke-opacity=".6"/>
                        </g>
                    </svg>
                    <div class="palette">
                        <div class="palette-strip"><button aria-label="Закрыть палитру">×</button></div>
                        <div class="palette-grid">
                            <button aria-label="Сдвиг узла"><svg><use href="#p1"/></svg></button>
                            <button aria-label="Дуга"><svg><use href="#p2"/></svg></button>
                            <button aria-label="Касательная"><svg><use href="#p3"/></svg></button>
                            <button aria-label="Смещение ребра"><svg><use href="#p4"/></svg></button>
                            <button aria-label="Добавить"><svg><use href="#p5"/></svg></button>
                            <button class="pressed" aria-label="Вычесть"><svg><use href="#p6"/></svg></button>
                            <button aria-label="Изгиб"><svg><use href="#p7"/></svg></button>
                            <button aria-label="Переместить"><svg><use href="#p8"/></svg></button>
                            <button aria-label="Повернуть"><svg><use href="#p9"/></svg></button>
                            <button aria-label="Отразить"><svg><use href="#p10"/></svg></button>
                            <button aria-label="Поднять"><svg><use href="#p11"/></svg></button>
                            <button aria-label="Размножить"><svg><use href="#p12"/></svg></button>
                        </div>
                    </div>
                </div>
                <div class="scroll-v">
                    <button aria-label="Вверх"><span class="tri up"></span></button>
                    <span class="track"></span>
                    <div class="thumb"></div>
                    <span class="track rest"></span>
                    <button aria-label="Вниз"><span class="tri down"></span></button>
                </div>
                <div class="navbar">
                    <button class="raised" aria-label="Навигатор"><svg><use href="#n1"/></svg></button>
                    <button class="raised" aria-label="Просмотр"><svg><use href="#n2"/></svg></button>
                    <button class="raised" aria-label="Ориентация"><svg><use href="#n3"/></svg></button>
                    <button class="raised scale">1:100</button>
                    <button class="raised percent">61 %</button>
                    <button class="raised next" disabled aria-label="Далее"><span class="tri small"></span></button>
                    <button class="raised" aria-label="Масштаб"><svg><use href="#zoompm"/></svg></button>
                    <button class="raised" aria-label="Увеличить"><svg><use href="#zoomin"/></svg></button>
                    <button class="raised" aria-label="Уменьшить"><svg><use href="#zoomout"/></svg></button>
                    <button class="raised" aria-label="Панорама"><svg><use href="#hand"/></svg></button>
                    <button class="raised" aria-label="Уместить"><svg><use href="#fit"/></svg></button>
                    <button class="raised" aria-label="Предыдущий вид"><svg><use href="#zprev"/></svg></button>
                    <button class="raised" disabled aria-label="Следующий вид"><svg><use href="#znext"/></svg></button>
                    <div class="scroll-h">
                        <button aria-label="Влево"><span class="tri left"></span></button>
                        <span class="track"></span>
                        <div class="thumb"></div>
                        <span class="track rest"></span>
                        <button aria-label="Вправо"><span class="tri"></span></button>
                    </div>
                </div>
            </section>
        </main>
    </div>

    <!-- Coordinate box -->
    <div class="coords">
        <span class="grip"></span>
        <button class="raised" aria-label="Начало координат"><svg><use href="#xmark"/></svg></button>
        <div class="row">
            <button class="raised" aria-label="Наклонная ось"><svg><use href="#b1"/></svg></button>
            <button class="raised pressed" aria-label="Прямая ось"><svg><use href="#b2"/></svg></button>
            <button class="raised" aria-label="Повернутая сетка"><svg><use href="#b3"/></svg></button>
        </div>
        <div class="row">
            <button class="raised pressed" aria-label="Без сетки"><svg><use href="#b4"/></svg></button>
            <button class="raised" aria-label="Шаговая сетка"><svg><use href="#b5"/></svg></button>
            <button class="raised" aria-label="Конструкторская сетка"><svg><use href="#b6"/></svg></button>
        </div>
        <div class="coord-group">
            <button class="delta">Δ</button>
            <div class="fields">
                <label for="dx">Δx:</label><input id="dx" type="text" value="-7600">
                <label for="dy">Δy:</label><input id="dy" type="text" value="-5061">
            </div>
        </div>
        <div class="coord-group">
            <button class="delta">Δ</button>
            <div class="fields">
                <label for="dr">Δr:</label><input id="dr" type="text" value="9131">
                <label for="da">a:</label><input id="da" type="text" value="213,66°">
            </div>
        </div>
        <div class="coord-group gravity">
            <button class="raised pressed" disabled aria-label="Без гравитации"><svg><use href="#g1"/></svg></button>
            <button class="raised" disabled aria-label="К перекрытию"><svg><use href="#g2"/></svg></button>
            <button class="raised" disabled aria-label="К крыше"><svg><use href="#g3"/></svg></button>
            <button class="raised" disabled aria-label="К сетке"><svg><use href="#g4"/></svg></button>
        </div>
        <div class="level">
            <div>Δz: <span class="dim">0</span></div>
            <div class="ref">отн. Проектный нуль</div>
            <button class="more" aria-label="Уровни"><span class="tri small"></span></button>
        </div>
        <div class="coord-group snaps">
            <button class="raised snapping" aria-label="Курсорная привязка"><svg class="wide"><use href="#sg"/></svg></button>
            <button class="raised thin" aria-label="Варианты"><span class="tri small"></span></button>
            <div class="row gray">
                <button class="raised pressed" aria-label="Половина"><svg><use href="#s1"/></svg></button>
                <button class="raised pressed" aria-label="Центр"><svg><use href="#s2"/></svg></button>
                <button class="raised pressed" aria-label="Углы"><svg><use href="#s3"/></svg></button>
            </div>
            <div class="gray">
                <button class="raised" aria-label="Отрезок"><svg><use href="#s4"/></svg></button>
            </div>
        </div>
    </div>

    <footer class="status">
        <p>Укажите следующую вершину многоугольника крыши.</p>
        <span class="stat"><svg viewBox="0 0 18 16"><path fill="#fff" stroke="#444" d="M1.500 8.500l3-4h12l-2 4z"/><path fill="#b8b4b6" stroke="#444" d="M1.500 8.500h13l2-4v4l-2 3h-13z"/></svg>C: 1.33 ГБ</span>
        <span class="stat"><svg viewBox="0 0 18 16"><path stroke="#000" stroke-dasharray="1 1" stroke-width="2" d="M5 2h8M5 14h8M3 4v8M15 4v8"/><path fill="#e4e0c8" stroke="#000" d="M4.500 3.500h9v9h-9z"/></svg>3.26 ГБ</span>
        <span class="well"></span>
        <svg class="resize" viewBox="0 0 12 12"><path stroke="#8a8284" stroke-width="2" d="M1 12L12 1M5 12l7-7M9 12l3-3"/></svg>
    </footer>
</body>
</html>
```

FILE: styles.css
```css
:root {
    --face: #d7cfd1;
    --light: #fff;
    --shade: #8a8284;
    --dark: #4a4446;
    --navy: #0c246c;
    --dither: repeating-conic-gradient(#d7cfd1 0 25%, #fff 0 50%) 0 0 / 2px 2px;
}

* {
    box-sizing: border-box;
}

body {
    margin: 0;
    padding: 3px 5px 0 4px;
    min-height: 100vh;
    display: flex;
    flex-direction: column;
    background: var(--face);
    border-top: 1px solid #e8e0e2;
    border-right: 1px solid var(--dark);
    border-bottom: 2px solid var(--dark);
    font-family: "DejaVu Sans Condensed", "DejaVu Sans", Tahoma, sans-serif;
    font-size: 11px;
    line-height: 16px;
    color: #1c1618;
}

h1, h2, p {
    margin: 0;
    font: inherit;
}

button {
    margin: 0;
    padding: 0;
    border: 0;
    background: none;
    font: inherit;
    color: inherit;
    display: flex;
    align-items: center;
    justify-content: center;
}

svg {
    display: block;
    width: 20px;
    height: 20px;
    flex: none;
    fill: none;
    stroke: currentColor;
    shape-rendering: crispEdges;
}

.sprite {
    position: absolute;
    width: 0;
    height: 0;
}

.f {
    fill: currentColor;
    stroke: none;
}

button:disabled {
    color: #858082;
}

button:disabled svg {
    filter: drop-shadow(1px 1px 0 #fff);
}

.row {
    display: flex;
}

/* Triangles */
.tri {
    flex: none;
    border: 5px solid transparent;
    border-left: 6px solid currentColor;
    border-right: 0;
}

.tri.small {
    border-width: 4px 0 4px 4px;
}

.tri.left {
    transform: rotate(180deg);
}

.tri.down {
    transform: rotate(90deg);
}

.tri.up {
    transform: rotate(-90deg);
}

.caret {
    border: 3px solid transparent;
    border-top-color: currentColor;
    border-bottom: 0;
}

/* Title and menu */
.titlebar {
    display: flex;
    align-items: center;
    height: 18px;
    padding: 0 2px 0 3px;
    background: linear-gradient(90deg, #0c246c, #4a68ac 45%, #a4c6fa);
    color: #fff;
}

.titlebar h1 {
    margin-left: 2px;
    font-weight: bold;
}

.app-logo {
    width: 15px;
    height: 16px;
    stroke: none;
}

.win-controls {
    display: flex;
    margin-left: auto;
}

.win-controls button {
    width: 15px;
    height: 14px;
    background: var(--face);
    border: 1px solid;
    border-color: #fff var(--dark) var(--dark) #fff;
    color: #000;
}

.win-controls svg {
    width: 14px;
    height: 12px;
}

.win-controls .close {
    margin-left: 3px;
}

.menubar {
    display: flex;
    align-items: center;
    gap: 11px;
    height: 20px;
    padding: 0 2px 0 4px;
}

.menubar a {
    color: inherit;
    text-decoration: none;
}

.doc-icon {
    width: 14px;
    height: 16px;
    margin-right: -4px;
}

/* Toolbars */
.toolbar-row {
    display: flex;
    height: 24px;
    border-top: 1px solid var(--shade);
}

.toolbar {
    display: flex;
    padding-right: 3px;
    border-top: 1px solid var(--light);
    border-right: 1px solid var(--shade);
}

.toolbar::before,
.grip {
    content: "";
    width: 3px;
    margin: 1px 0 1px 2px;
    border: 1px solid;
    border-color: #fff var(--shade) var(--shade) #fff;
}

.tool {
    width: 27px;
}

.dither {
    background: var(--dither);
}

.pressed {
    background: var(--dither);
    border: 1px solid;
    border-color: var(--dark) #fff #fff var(--dark);
}

.sep {
    width: 2px;
    margin: 1px 3px;
    border-left: 1px solid var(--shade);
    border-right: 1px solid var(--light);
}

.drop {
    width: 13px;
}

.drop::after {
    content: "";
    border: 3px solid transparent;
    border-top-color: currentColor;
    border-bottom: 0;
}

.drop.framed {
    border: 1px solid;
    border-color: var(--shade) #fff #fff var(--shade);
}

.goto {
    width: 64px;
    padding: 0 4px 0 3px;
    justify-content: space-between;
}

/* Workspace */
.workspace {
    flex: 1;
    display: flex;
    padding-top: 1px;
    border-top: 1px solid var(--shade);
}

.toolbox {
    width: 92px;
    border-left: 1px solid var(--shade);
    border-right: 1px solid #fff;
    overflow: hidden;
}

.toolbox-title {
    display: flex;
    justify-content: space-between;
    align-items: center;
    height: 15px;
    padding: 0 2px;
    background: var(--navy);
    color: #fff;
    font-size: 10px;
    font-weight: bold;
}

.toolbox-title button,
.info-strip button {
    font-size: 14px;
    line-height: 12px;
}

.toolbox-head {
    display: flex;
    align-items: center;
    gap: 5px;
    height: 15px;
    padding-left: 9px;
    background: #eae2e4;
    border-bottom: 1px solid #c4bcbe;
    border-radius: 5px;
    white-space: nowrap;
}

.toolbox-head.center {
    justify-content: center;
    height: 16px;
    padding: 0;
}

.toolbox-head.spaced {
    height: 18px;
    margin-top: 1px;
    border-top: 1px solid #fff;
}

.item {
    width: 89px;
    height: 24px;
    padding-left: 5px;
    gap: 6px;
    justify-content: flex-start;
    white-space: nowrap;
}

.item + .toolbox-head {
    margin-top: 1px;
}

.item svg {
    width: 24px;
}

.item.active {
    background: #fff;
    border: 1px solid;
    border-color: var(--dark) #fff #fff var(--dark);
    padding-left: 4px;
}

.content {
    flex: 1;
    min-width: 0;
    display: flex;
    flex-direction: column;
    padding-left: 3px;
}

/* Info box */
.infobox {
    display: flex;
    height: 53px;
    border-bottom: 1px solid #fff;
}

.info-strip {
    width: 14px;
    display: flex;
    flex-direction: column;
    align-items: center;
    justify-content: space-between;
    padding: 2px 0;
    background: var(--navy);
    color: #fff;
    font-weight: bold;
}

.info-strip span {
    writing-mode: vertical-rl;
    transform: rotate(180deg);
    line-height: 14px;
}

.info-body {
    flex: 1;
    min-width: 0;
    display: flex;
    flex-direction: column;
    justify-content: space-between;
}

.info-tools {
    display: flex;
    height: 39px;
    border-bottom: 1px solid #fff;
}

.info-group {
    display: flex;
    align-items: flex-end;
    padding: 0 1px;
    border-left: 1px solid #fff;
    border-right: 1px solid #c4bcbe;
}

.selection {
    padding-left: 0;
}

.selection p {
    font: bold 10px/16px "Liberation Sans", Arial, sans-serif;
}

.raised {
    height: 28px;
    width: 40px;
    background: var(--face);
    border: 1px solid;
    border-color: #fff var(--dark) var(--dark) #fff;
    box-shadow: inset -1px -1px 0 var(--shade);
}

.raised.pressed {
    background: var(--dither);
    border-color: var(--dark) #fff #fff var(--dark);
    box-shadow: inset 1px 1px 0 var(--shade);
}

.info-tools .raised > .tri.small {
    align-self: flex-end;
    margin-bottom: 2px;
}

.info-tools .flat {
    height: 21px;
}

.wide {
    width: 24px;
}

.info-tools .big svg {
    width: 28px;
    height: 23px;
}

.info-tools .narrow {
    width: 33px;
}

.info-tools .layer {
    width: 127px;
    padding: 0 3px 0 5px;
    justify-content: flex-start;
    gap: 1px;
    white-space: nowrap;
}

.info-tools .layer > .tri.small {
    align-self: flex-start;
    margin: 5px 0 0 auto;
}

.info-tools .plan {
    width: 160px;
}

.angles {
    align-items: center;
    padding: 0 3px 0 28px;
}

.slope {
    width: 28px;
    height: 26px;
}

.fields {
    display: grid;
    grid-template-columns: auto auto;
    align-items: center;
    gap: 1px 6px;
    font: bold 11px/14px "Liberation Sans", Arial, sans-serif;
}

.fields input {
    border: 0;
    padding: 0 1px;
    width: 92px;
    height: 13px;
    background: #fff;
    color: inherit;
    font: inherit;
}

.angles .fields {
    margin-left: 9px;
}

.angles input {
    width: 79px;
    height: 16px;
    border: 1px solid;
    border-color: var(--dark) #fff #fff var(--dark);
}

/* Scroll bars */
.scroll-h,
.scroll-v {
    display: flex;
    background: var(--dither);
}

.scroll-h {
    flex: 1;
}

.scroll-h button,
.scroll-v button,
.thumb {
    flex: none;
    background: var(--face);
    border: 1px solid;
    border-color: #fff var(--dark) var(--dark) #fff;
}

.scroll-h button {
    width: 16px;
}

.scroll-h .track {
    flex: 139;
}

.scroll-h .thumb {
    flex: 185;
}

.scroll-h .rest {
    flex: 79;
}

.scroll-h.mini {
    flex: none;
    height: 10px;
}

.scroll-h.mini .thumb {
    flex: 367;
}

.scroll-h.mini .track {
    flex: 443;
}

.scroll-h .tri,
.scroll-v .tri {
    border-width: 4px 0 4px 5px;
}

.scroll-h.mini .tri {
    border-width: 2px 0 2px 3px;
}

.scroll-v {
    flex-direction: column;
}

.scroll-v button {
    height: 15px;
}

.scroll-v .track {
    flex: 181;
}

.scroll-v .thumb {
    flex: 176;
}

.scroll-v .rest {
    flex: 108;
}

/* Floor plan */
.plan-view {
    flex: 1;
    margin-top: 2px;
    display: grid;
    grid-template: 1fr 16px / 1fr 16px;
    border-top: 2px solid var(--dark);
    border-left: 2px solid var(--dark);
    border-bottom: 1px solid #fff;
}

.drawing {
    position: relative;
    background: #fefcff;
    overflow: hidden;
}

.plan-svg {
    position: absolute;
    width: 100%;
    height: 100%;
    stroke: none;
    shape-rendering: auto;
}

.palette {
    position: absolute;
    left: 502px;
    top: 90px;
    display: flex;
    padding: 2px;
    background: var(--face);
    border: 1px solid;
    border-color: #fff var(--dark) var(--dark) #fff;
    box-shadow: inset -1px -1px 0 var(--shade);
}

.palette-strip {
    width: 16px;
    padding: 3px 2px;
    background: linear-gradient(#8aa8e0, #3c5ca8 50%, #0c246c);
}

.palette-strip button {
    width: 12px;
    height: 12px;
    background: var(--face);
    border: 1px solid;
    border-color: #fff var(--dark) var(--dark) #fff;
    font-weight: bold;
    line-height: 10px;
}

.palette-grid {
    display: grid;
    grid-template-columns: repeat(7, 26px);
    gap: 2px 0;
}

.palette-grid button {
    height: 26px;
    border: 1px solid;
    border-color: #fff var(--dark) var(--dark) #fff;
    color: #000;
}

.palette-grid .pressed {
    border-color: var(--dark) #fff #fff var(--dark);
}

.navbar {
    display: flex;
    font-size: 10px;
}

.navbar .raised {
    width: 24px;
    height: 16px;
}

.navbar svg {
    width: 18px;
    height: 16px;
}

.navbar .scale {
    width: 64px;
}

.navbar .percent {
    width: 75px;
}

.navbar .next {
    width: 21px;
}

/* Coordinate box */
.coords {
    display: flex;
    align-items: center;
    gap: 6px;
    height: 32px;
    border-top: 1px solid var(--shade);
    border-bottom: 1px solid var(--shade);
}

.grip {
    height: 26px;
}

.coords .raised {
    width: 26px;
    height: 26px;
}

.coord-group {
    display: flex;
    align-items: center;
    height: 28px;
    padding-left: 3px;
    border-left: 2px groove #fff;
}

.coords label {
    text-align: right;
    width: 24px;
}

.coords .fields {
    gap: 1px 2px;
}

.delta {
    width: 14px;
    height: 26px;
    background: var(--dither);
    border: 1px solid;
    border-color: var(--dark) #fff #fff var(--dark);
    font-weight: bold;
    font-size: 14px;
}

.level {
    flex: 1;
    display: grid;
    grid-template-columns: 1fr 12px;
    font: bold 10px/14px "Liberation Sans", Arial, sans-serif;
    padding-left: 3px;
}

.level > div:first-child {
    grid-column: 1 / 3;
}

.dim {
    color: #8a8284;
    font-weight: normal;
}

.more {
    border: 1px solid;
    border-color: #fff var(--dark) var(--dark) #fff;
}

.coords .snapping {
    width: 30px;
}

.coords .thin {
    width: 14px;
}

.snaps {
    padding-right: 8px;
    padding-left: 6px;
}

.snaps .row {
    margin: 0 4px;
}

.gray svg {
    color: #858082;
}

/* Status bar */
.status {
    display: flex;
    align-items: center;
    height: 25px;
    padding-left: 2px;
}

.status p {
    flex: 1;
}

.stat {
    display: flex;
    align-items: center;
    gap: 7px;
    margin-left: 24px;
}

.stat svg {
    width: 18px;
    height: 16px;
}

.well {
    width: 16px;
    height: 20px;
    margin-left: 20px;
    border: 1px solid;
    border-color: var(--shade) #fff #fff var(--face);
}

.resize {
    width: 12px;
    height: 12px;
    margin-left: 6px;
    align-self: flex-end;
}
```
